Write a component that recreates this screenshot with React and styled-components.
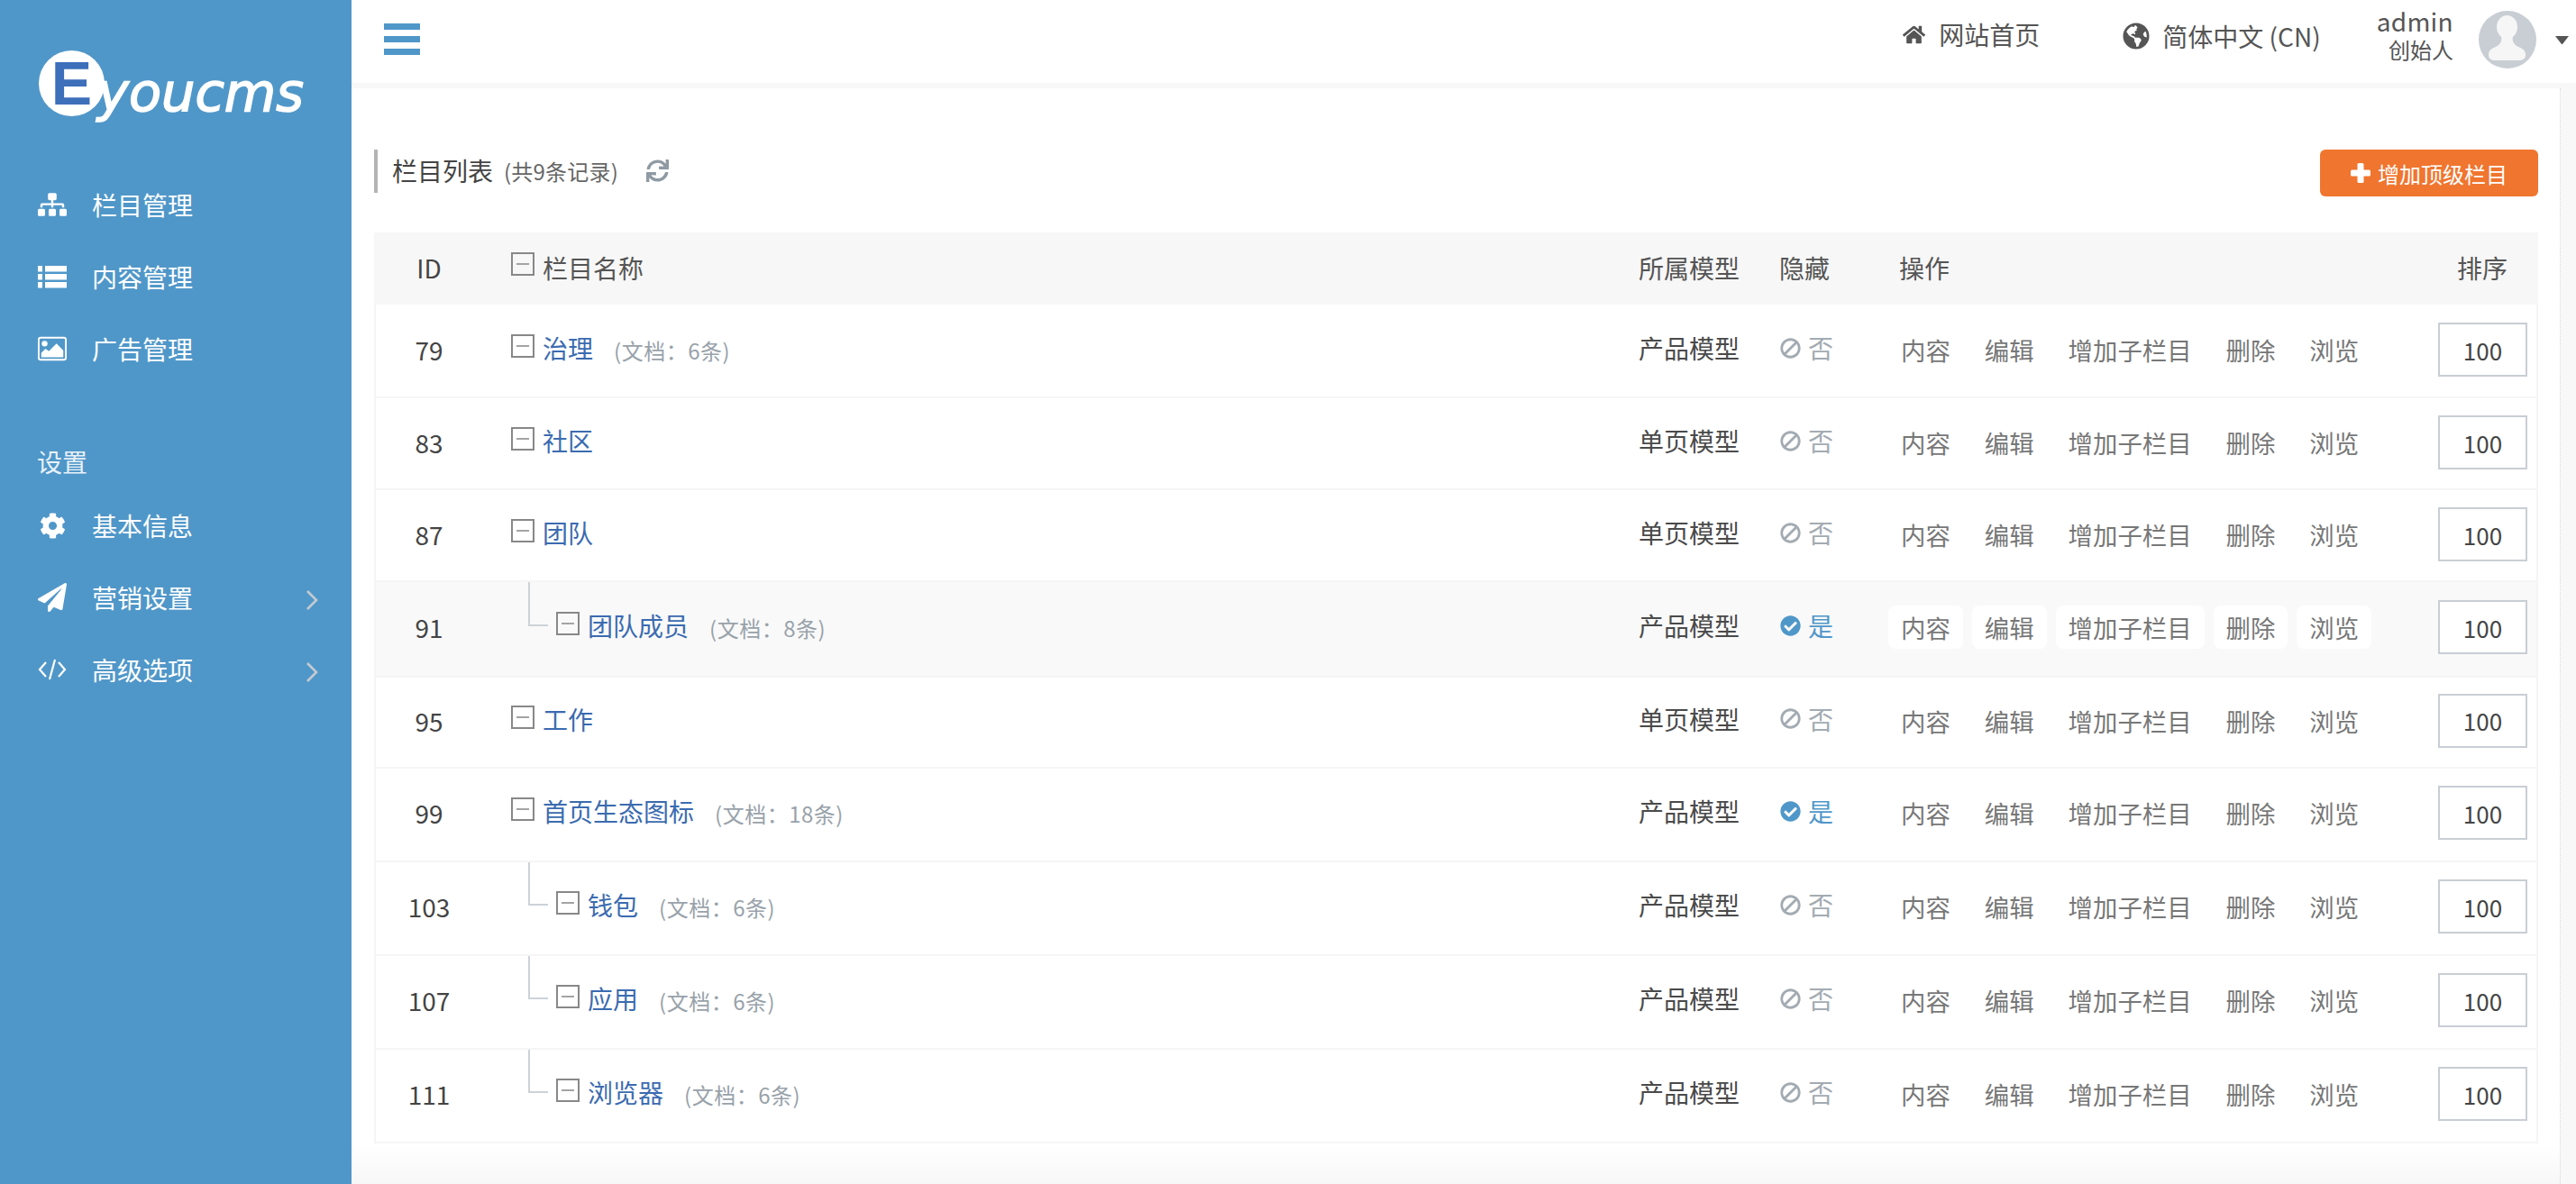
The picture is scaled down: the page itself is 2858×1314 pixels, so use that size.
import React from 'react';
import styled, { createGlobalStyle } from 'styled-components';
import {
  FaSitemap, FaCog, FaPaperPlane, FaHome, FaGlobeAmericas,
  FaSync, FaBan, FaCheckCircle,
} from 'react-icons/fa';

const Global = createGlobalStyle`
  html, body { margin: 0; padding: 0; height: 100%; overflow: hidden; background: #f8f8f8; }
  body { font-family: "Noto Sans CJK SC", "Noto Sans", sans-serif; color: #444; }
  * { box-sizing: border-box; }
`;

const Shell = styled.div`display: flex; height: 1314px; width: 2858px;`;

const Sidebar = styled.aside`
  width: 390px; flex: none; background: #5097c9; color: #fff;
`;
const Logo = styled.div`
  height: 187px; padding: 56px 0 0 43px; display: flex; align-items: flex-start;
`;
const LogoDisc = styled.div`
  width: 73px; height: 73px; border-radius: 50%; background: #fff; flex: none;
  display: flex; align-items: center; justify-content: center;
  color: #3d6fba; font: 700 68px/73px "Liberation Sans", sans-serif;
`;
const LogoWord = styled.div`
  margin: 12px 0 0 -8px; color: #fff; -webkit-text-stroke: 1.6px #fff;
  font: italic 400 59px/70px "DejaVu Sans", sans-serif;
`;
const NavItem = styled.div`
  height: 80px; display: flex; align-items: center; padding: 0 37px 0 42px;
  font-size: 28px; color: #fff;
`;
const NavIcon = styled.span`
  width: 32px; height: 32px; margin-right: 28px; flex: none;
  display: flex; align-items: center; justify-content: center;
`;
const NavText = styled.span`flex: 1;`;
const NavLabel = styled.div`
  margin-top: 40px; height: 76px; padding: 25px 0 0 41px;
  font-size: 28px; line-height: 40px; color: rgba(255,255,255,.88);
`;
const Chevron = styled.svg`width: 14px; height: 24px; margin-top: 6px; flex: none;`;

const Main = styled.main`flex: 1; display: flex; flex-direction: column; min-width: 0;`;
const Header = styled.header`
  height: 92px; flex: none; background: #fff; display: flex; align-items: center;
  justify-content: space-between; padding: 0 8px 12px 36px;
`;
const Burger = styled.div`
  width: 40px; display: flex; flex-direction: column; gap: 7px; margin-top: 7px;
`;
const BurgerBar = styled.span`display: block; height: 7px; background: #5097c9;`;
const HeaderRight = styled.div`display: flex; align-items: center; color: #555;`;
const HeaderLink = styled.a`
  display: flex; align-items: center; font-size: 28px; line-height: 40px;
  margin-right: ${p => p.$mr}px; position: relative; top: ${p => p.$top || 0}px;
  svg { margin-right: ${p => p.$gap}px; flex: none; }
`;
const UserBlock = styled.div`
  display: flex; flex-direction: column; align-items: flex-end; margin-right: 28px;
`;
const UserName = styled.span`font-size: 28px; line-height: 32px; letter-spacing: .3px; margin-top: -2px;`;
const UserRole = styled.span`font-size: 24px; line-height: 32px;`;
const Avatar = styled.svg`width: 64px; height: 64px; margin: 8px 21px 0 0; flex: none;`;
const Caret = styled.span`
  width: 15px; height: 9px; margin-top: 8px; flex: none;
  border-left: 7.5px solid transparent; border-right: 7.5px solid transparent;
  border-top: 9px solid #555;
`;

const Panel = styled.section`
  flex: 1; margin: 6px 17px 0 0; padding: 68px 24px 0 25px;
  background: linear-gradient(to bottom, #fff 0, #fff 1171px, #f7f7f7 1216px);
  border-right: 1px dotted #d8d8d8;
`;
const TitleBar = styled.div`
  height: 52px; display: flex; justify-content: space-between; align-items: flex-start;
  margin-bottom: 40px;
`;
const Title = styled.div`
  height: 48px; border-left: 4px solid #b4b4b4; padding: 0 0 2px 16px;
  display: flex; align-items: center; color: #444;
`;
const TitleMain = styled.span`font-size: 28px;`;
const TitleCount = styled.span`font-size: 24px; color: #666; margin-left: 12px; letter-spacing: .2px;`;
const Refresh = styled.span`display: flex; margin-left: 31px; color: #8f9aa3;`;
const AddButton = styled.button`
  width: 242px; height: 52px; border: 0; border-radius: 6px; background: #f0752f; color: #fff;
  display: flex; align-items: center; justify-content: center; gap: 8px;
  font: 24px "Noto Sans CJK SC", sans-serif; padding: 0;
`;

const Row = styled.div`
  display: grid; grid-template-columns: 118px 1283px 156px 121px 610px 1fr; align-items: center;
  height: ${p => p.$h}px; padding-bottom: ${p => p.$pad}px;
  background: ${p => (p.$hover ? '#f9f9f9' : '#fff')};
  border-left: 2px solid #f5f5f5; border-right: 2px solid #f5f5f5; border-bottom: 2px solid #f5f5f5;
  font-size: 28px;
`;
const HeadRow = styled(Row)`
  background: #f7f7f7; border-color: #f7f7f7; color: #555;
`;
const IdCell = styled.div`text-align: center; color: #444;`;
const NameCell = styled.div`
  position: relative; height: 100%; display: flex; align-items: center;
  padding-left: ${p => (p.$child ? 82 : 32)}px;
  ${p => p.$child && `
    &::before {
      content: ''; position: absolute; left: 51px; top: 0; width: 20px; height: calc(50% - 3px);
      border-left: 2px solid #ccd2d8; border-bottom: 2px solid #ccd2d8;
    }
  `}
`;
const Expand = styled.span`
  width: 26px; height: 26px; border: 2px solid #888; flex: none; margin: 0 9px 8px 0;
  display: flex; align-items: center; justify-content: center;
  &::after { content: ''; width: 14px; height: 2px; background: #a4a4a4; }
`;
const CatLink = styled.a`color: #3b6bb0; padding-bottom: 4px;`;
const Note = styled.span`font-size: 24px; color: #98a2aa; margin-left: 23px; letter-spacing: .5px;`;
const ModelCell = styled.div`padding-bottom: 4px; color: #4a4a4a;`;
const HiddenCell = styled.div`
  display: flex; align-items: center; gap: 8px; padding: 0 0 4px 1px;
  color: ${p => (p.$on ? '#5097c9' : '#a3abb2')};
`;
const BanIcon = styled(FaBan)`transform: scaleX(-1);`;
const HeadHidden = styled.div`color: #555;`;
const HeadOps = styled.div`padding-left: 12px;`;
const HeadSort = styled.div`padding-left: 21px;`;
const Ops = styled.div`display: flex; gap: 10px; font-size: 27.4px;`;
const OpBtn = styled.a`
  height: 48px; padding: 0 14px; display: flex; align-items: center; border-radius: 8px;
  color: #777; background: ${p => (p.$hover ? '#fff' : 'transparent')};
`;
const SortCell = styled.div`display: flex;`;
const SortInput = styled.input`
  width: 99px; height: 60px; border: 2px solid #c8ced4; background: #fff; text-align: center;
  font: 26px "Noto Sans CJK SC", sans-serif; color: #444; padding: 0; outline: none;
`;

const rows = [
  { id: 79, name: '治理', note: '(文档：6条)', model: '产品模型', h: 104, pad: 2 },
  { id: 83, name: '社区', model: '单页模型', h: 102, pad: 2 },
  { id: 87, name: '团队', model: '单页模型', h: 102, pad: 2 },
  { id: 91, name: '团队成员', note: '(文档：8条)', model: '产品模型', h: 106, pad: 4, child: true, on: true, hover: true },
  { id: 95, name: '工作', model: '单页模型', h: 101, pad: 4 },
  { id: 99, name: '首页生态图标', note: '(文档：18条)', model: '产品模型', h: 104, pad: 4, on: true },
  { id: 103, name: '钱包', note: '(文档：6条)', model: '产品模型', h: 104, pad: 4, child: true },
  { id: 107, name: '应用', note: '(文档：6条)', model: '产品模型', h: 104, pad: 4, child: true },
  { id: 111, name: '浏览器', note: '(文档：6条)', model: '产品模型', h: 104, pad: 4, child: true },
];
const ops = ['内容', '编辑', '增加子栏目', '删除', '浏览'];

const ListGlyph = () => (
  <svg width="32" height="25" viewBox="0 0 32 25" fill="#fff">
    <rect x="0" y="0" width="5" height="6.5" />
    <rect x="8" y="0" width="24" height="6.5" />
    <rect x="0" y="9" width="5" height="6.5" />
    <rect x="8" y="9" width="24" height="6.5" />
    <rect x="0" y="18" width="5" height="6.5" />
    <rect x="8" y="18" width="24" height="6.5" />
  </svg>
);
const ImageGlyph = () => (
  <svg width="34" height="28" viewBox="0 0 34 28" fill="#fff">
    <rect x="1" y="1" width="32" height="26" rx="2.5" fill="none" stroke="#fff" strokeWidth="2" />
    <circle cx="8" cy="8" r="3.4" />
    <polygon points="4,24 4,19 9,14 13,17 22,8 30,16 30,24" />
  </svg>
);
const CodeGlyph = () => (
  <svg width="32" height="24" viewBox="0 0 32 24" fill="none" stroke="#fff" strokeWidth="2.2">
    <polyline points="9,4 2,12 9,20" />
    <line x1="19" y1="1" x2="13" y2="23" />
    <polyline points="23,4 30,12 23,20" />
  </svg>
);
const PlusGlyph = () => (
  <svg width="22" height="22" viewBox="0 0 22 22" fill="#fff">
    <rect x="7.5" y="0" width="7" height="22" rx="1.5" />
    <rect x="0" y="7.5" width="22" height="7" rx="1.5" />
  </svg>
);
const Arrow = () => (
  <Chevron viewBox="0 0 14 24" fill="none" stroke="#c3cbd2" strokeWidth="2.6">
    <polyline points="2,2 12,12 2,22" />
  </Chevron>
);

const nav = [
  { t: '栏目管理', i: <FaSitemap size={32} /> },
  { t: '内容管理', i: <ListGlyph /> },
  { t: '广告管理', i: <ImageGlyph /> },
];

export default function App() {
  return (
    <Shell>
      <Global />
      <Sidebar>
        <Logo>
          <LogoDisc>E</LogoDisc>
          <LogoWord>youcms</LogoWord>
        </Logo>
        {nav.map(n => (
          <NavItem key={n.t}><NavIcon>{n.i}</NavIcon><NavText>{n.t}</NavText></NavItem>
        ))}
        <NavLabel>设置</NavLabel>
        <NavItem><NavIcon><FaCog size={29} /></NavIcon><NavText>基本信息</NavText></NavItem>
        <NavItem><NavIcon><FaPaperPlane size={32} /></NavIcon><NavText>营销设置</NavText><Arrow /></NavItem>
        <NavItem><NavIcon><CodeGlyph /></NavIcon><NavText>高级选项</NavText><Arrow /></NavItem>
      </Sidebar>
      <Main>
        <Header>
          <Burger><BurgerBar /><BurgerBar /><BurgerBar /></Burger>
          <HeaderRight>
            <HeaderLink $mr={92} $gap={15} $top={-2}><FaHome size={25} />网站首页</HeaderLink>
            <HeaderLink $mr={62} $gap={14}><FaGlobeAmericas size={30} />简体中文 (CN)</HeaderLink>
            <UserBlock>
              <UserName>admin</UserName>
              <UserRole>创始人</UserRole>
            </UserBlock>
            <Avatar viewBox="0 0 64 64">
              <circle cx="32" cy="32" r="32" fill="#c8ced4" />
              <ellipse cx="31.5" cy="18" rx="11.5" ry="13" fill="#f6f6f6" />
              <path d="M25 27 C26 33 25 37 19 40 C13 42 11 45 11 49 C11 53 14 55 19 55 L44 55 C49 55 52 53 52 49 C52 45 50 42 44 40 C38 37 37 33 38 27 Z" fill="#f6f6f6" />
            </Avatar>
            <Caret />
          </HeaderRight>
        </Header>
        <Panel>
          <TitleBar>
            <Title>
              <TitleMain>栏目列表</TitleMain>
              <TitleCount>(共9条记录)</TitleCount>
              <Refresh><FaSync size={25} /></Refresh>
            </Title>
            <AddButton><PlusGlyph />增加顶级栏目</AddButton>
          </TitleBar>
          <HeadRow $h={80} $pad={0}>
            <IdCell>ID</IdCell>
            <NameCell><Expand />栏目名称</NameCell>
            <div>所属模型</div>
            <HeadHidden>隐藏</HeadHidden>
            <HeadOps>操作</HeadOps>
            <HeadSort>排序</HeadSort>
          </HeadRow>
          {rows.map(r => (
            <Row key={r.id} $h={r.h} $pad={r.pad} $hover={r.hover}>
              <IdCell>{r.id}</IdCell>
              <NameCell $child={r.child}>
                <Expand />
                <CatLink>{r.name}</CatLink>
                {r.note && <Note>{r.note}</Note>}
              </NameCell>
              <ModelCell>{r.model}</ModelCell>
              <HiddenCell $on={r.on}>
                {r.on ? <FaCheckCircle size={23} /> : <BanIcon size={23} />}
                {r.on ? '是' : '否'}
              </HiddenCell>
              <Ops>
                {ops.map(o => <OpBtn key={o} $hover={r.hover}>{o}</OpBtn>)}
              </Ops>
              <SortCell><SortInput defaultValue="100" /></SortCell>
            </Row>
          ))}
        </Panel>
      </Main>
    </Shell>
  );
}
